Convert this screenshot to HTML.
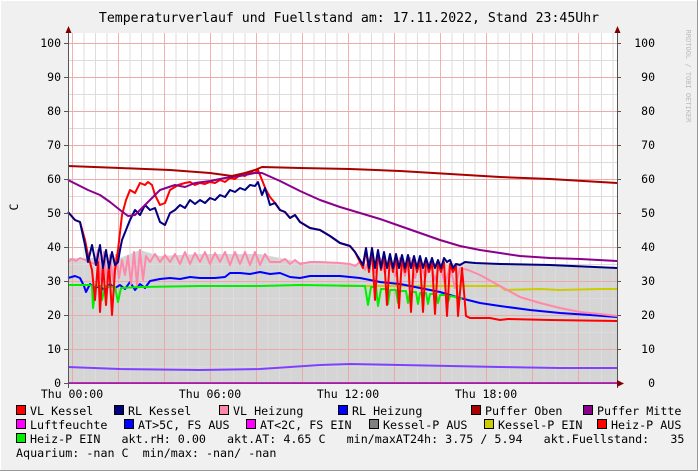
<!DOCTYPE html>
<html><head><meta charset="utf-8"><style>
html,body{margin:0;padding:0;background:#f0f0f0}
svg{display:block}
text{font-family:"DejaVu Sans Mono","Liberation Mono",monospace;fill:#000}
</style></head><body>
<svg width="698" height="471" viewBox="0 0 698 471" xmlns="http://www.w3.org/2000/svg">
<rect x="0" y="0" width="698" height="471" fill="#f0f0f0"/>
<line x1="0.5" y1="0" x2="0.5" y2="471" stroke="#fff"/>
<line x1="0" y1="0.5" x2="698" y2="0.5" stroke="#fff"/>
<line x1="697.5" y1="0" x2="697.5" y2="471" stroke="#999"/>
<line x1="0" y1="470.5" x2="698" y2="470.5" stroke="#999"/>
<rect x="68" y="33" width="549" height="350" fill="#fff"/>
<polygon fill="#d5d5d5" points="68,258 120,258 140,250 160,256 200,254 260,254 300,262 360,264 470,263 475,263 500,264 550,265 617,268 617,383 68,383"/>
<g stroke="#dcdcdc" stroke-width="1">
<path d="M68,366.5H617M68,349.5H617M68,332.5H617M68,315.5H617M68,298.5H617M68,281.5H617M68,264.5H617M68,247.5H617M68,230.5H617M68,213.5H617M68,196.5H617M68,179.5H617M68,162.5H617M68,145.5H617M68,128.5H617M68,111.5H617M68,94.5H617M68,77.5H617M68,60.5H617M68,43.5H617"/>
<path d="M84,33V383M95.5,33V383M107,33V383M130,33V383M141.5,33V383M153,33V383M176,33V383M187.5,33V383M199,33V383M222,33V383M233.5,33V383M245,33V383M268,33V383M279.5,33V383M291,33V383M314,33V383M325.5,33V383M337,33V383M360,33V383M371.5,33V383M383,33V383M406,33V383M417.5,33V383M429,33V383M452,33V383M463.5,33V383M475,33V383M498,33V383M509.5,33V383M521,33V383M544,33V383M555.5,33V383M567,33V383M590,33V383M601.5,33V383M613,33V383"/>
</g>
<g stroke="#f0a0a0" stroke-width="1" opacity="0.8">
<path d="M68,349.5H617M68,315.5H617M68,281.5H617M68,247.5H617M68,213.5H617M68,179.5H617M68,145.5H617M68,111.5H617M68,77.5H617M68,43.5H617"/>
<path d="M72.5,33V383M118.5,33V383M164.5,33V383M210.5,33V383M256.5,33V383M302.5,33V383M348.5,33V383M394.5,33V383M440.5,33V383M486.5,33V383M532.5,33V383M578.5,33V383"/>
</g>
<g fill="none" stroke-width="2" stroke-linejoin="round">
<polyline stroke="#8040ff" points="68,367 120,369 200,370 260,369 290,367 320,365 350,364 400,365 450,366 500,367 560,368 617,368"/>
<polyline stroke="#ff00ff" points="68,383 617,383"/>
<polyline stroke="#cccc00" points="340,286 465,286 500,286 505,290 540,289 560,290 600,289 617,289"/>
<polyline stroke="#0000ff" points="68,278 75,276 80,278 84,286 86,292 90,284 95,288 100,286 105,291 110,284 115,288 120,285 125,289 130,282 135,290 140,284 145,288 150,281 160,279 170,278 180,279 190,277 200,278 215,278 225,277 230,273 240,273 250,274 260,272 270,274 280,273 290,277 300,278 310,276 320,276 340,276 360,278 380,282 400,284 420,288 440,292 460,298 480,303 500,306 530,310 560,313 590,315 617,317"/>
<polyline stroke="#ff88aa" points="68,262 72,259 76,261 80,258 85,260 90,262 95,264 98,250 101,280 104,252 107,282 110,255 113,280 116,255 119,278 122,260 125,275 128,256 131,284 134,252 137,285 140,250 143,280 146,256 150,262 155,254 160,262 165,255 170,262 175,254 180,264 185,252 190,264 195,253 200,262 205,252 210,264 215,253 220,262 225,252 230,265 235,252 240,264 245,252 250,265 255,252 260,265 265,254 270,262 280,262 285,259 290,264 295,260 300,264 310,262 320,262 340,263 350,264 355,266 360,262 365,270 370,258 375,272 380,258 385,274 390,258 395,276 400,258 405,276 410,258 415,278 420,260 425,278 430,262 435,280 440,264 445,285 450,266 455,288 460,268 468,270 480,275 500,286 520,297 540,303 560,308 580,312 600,314 617,316"/>
<polyline stroke="#00ee00" points="68,285 90,285 92,286 93,308 96,286 100,286 102,300 105,286 115,287 118,302 121,288 140,287 200,286 260,286 300,285 365,286 368,305 371,287 376,287 378,306 381,289 386,289 388,304 390,290 396,290 398,303 400,291 406,291 408,303 410,292 416,292 418,304 420,293 426,293 428,304 430,294 436,294 438,303 440,295 446,295 448,302 450,296 456,297 458,300 462,298"/>
<polyline stroke="#ff0000" points="68,212 75,220 80,222 85,240 88,255 92,270 95,300 98,262 100,312 103,265 106,305 109,262 112,315 115,270 118,250 122,215 126,200 130,190 135,193 140,183 145,185 148,182 152,185 155,195 160,205 165,203 170,190 175,187 178,185 185,183 190,182 195,185 200,183 205,184 210,182 215,183 220,180 225,182 230,178 235,179 240,175 245,176 250,172 255,173 258,170 262,180 266,190 270,197 275,203 280,210 285,212 290,218 295,215 300,222 305,225 310,228 320,230 330,236 340,243 350,246 355,252 360,262 363,268 366,250 369,272 372,250 375,300 378,252 381,270 384,256 387,305 390,256 393,272 396,256 399,308 402,258 405,272 408,258 411,312 414,258 417,272 420,260 423,312 426,260 429,272 432,262 435,314 438,262 441,272 444,262 447,316 450,264 453,272 456,266 458,316 462,268 466,316 470,318 490,318 500,320 508,319 550,320 617,321"/>
<polyline stroke="#000080" points="68,212 75,220 80,222 85,245 88,262 92,245 96,265 100,245 103,268 106,250 109,268 112,252 115,265 118,262 120,250 122,240 126,230 130,220 135,210 140,215 145,205 150,210 155,208 160,222 165,225 170,213 175,210 180,205 185,208 190,200 195,204 200,200 205,203 210,198 215,200 220,195 225,197 230,190 235,192 240,188 245,190 250,185 255,186 258,182 262,195 265,188 270,205 275,203 280,210 285,212 290,218 295,215 300,222 305,225 310,228 320,230 330,236 340,243 350,246 355,252 360,260 363,265 366,248 369,268 372,248 375,268 378,250 381,268 384,252 387,268 390,254 393,268 396,254 399,268 402,255 405,268 408,255 411,268 414,256 417,268 420,256 423,268 426,258 429,268 432,258 435,268 438,260 441,268 444,258 447,262 450,260 453,268 456,264 460,265 465,262 475,263 500,264 550,265 617,268"/>
<polyline stroke="#8b008b" points="68,180 80,186 88,190 100,195 110,202 120,210 128,216 135,215 145,205 160,190 175,185 185,187 195,183 210,181 225,178 240,176 255,173 262,173 280,181 300,191 320,200 340,207 360,213 380,219 400,226 420,233 440,240 460,246 480,250 500,253 520,256 550,258 580,259 617,261"/>
<polyline stroke="#aa0000" points="68,166 120,168 170,170 210,173 232,176 245,173 255,170 262,167 300,168 350,169 400,171 450,174 500,177 550,179 617,183"/>
</g>
<line x1="68.5" y1="28" x2="68.5" y2="388" stroke="#555"/>
<line x1="617.5" y1="28" x2="617.5" y2="388" stroke="#555"/>
<line x1="64" y1="383.5" x2="622" y2="383.5" stroke="#555"/>
<polygon points="65.5,33 71.5,33 68.5,26" fill="#800000"/>
<polygon points="614.5,33 620.5,33 617.5,26" fill="#800000"/>
<polygon points="617,380 617,387 624,383.5" fill="#800000"/>
<g stroke="#555"><path d="M64,43.5H68M64,77.5H68M64,111.5H68M64,145.5H68M64,179.5H68M64,213.5H68M64,247.5H68M64,281.5H68M64,315.5H68M64,349.5H68M617,43.5H621M617,77.5H621M617,111.5H621M617,145.5H621M617,179.5H621M617,213.5H621M617,247.5H621M617,281.5H621M617,315.5H621M617,349.5H621"/></g>
<g font-size="11.5" text-anchor="end">
<text x="61" y="47">100</text><text x="61" y="81">90</text><text x="61" y="115">80</text><text x="61" y="149">70</text><text x="61" y="183">60</text><text x="61" y="217">50</text><text x="61" y="251">40</text><text x="61" y="285">30</text><text x="61" y="319">20</text><text x="61" y="353">10</text><text x="61" y="387">0</text>
</g>
<g font-size="11.5" text-anchor="end">
<text x="655" y="47">100</text><text x="655" y="81">90</text><text x="655" y="115">80</text><text x="655" y="149">70</text><text x="655" y="183">60</text><text x="655" y="217">50</text><text x="655" y="251">40</text><text x="655" y="285">30</text><text x="655" y="319">20</text><text x="655" y="353">10</text><text x="655" y="387">0</text>
</g>
<g font-size="11.5" text-anchor="middle">
<text x="72" y="398">Thu 00:00</text><text x="210" y="398">Thu 06:00</text><text x="348" y="398">Thu 12:00</text><text x="486" y="398">Thu 18:00</text>
</g>
<text x="349" y="22" font-size="13.2" text-anchor="middle">Temperaturverlauf und Fuellstand am: 17.11.2022, Stand 23:45Uhr</text>
<text x="18" y="207" font-size="11.5" text-anchor="middle" transform="rotate(-90 18 207)">C</text>
<text x="686" y="76" font-size="7" style="fill:#bbb" text-anchor="middle" transform="rotate(90 686 76)">RRDTOOL / TOBI OETIKER</text>
<g stroke="#000" stroke-width="1">
<rect x="16.5" y="405.5" width="9" height="9" fill="#ff0000"/>
<rect x="114.5" y="405.5" width="9" height="9" fill="#000080"/>
<rect x="219.5" y="405.5" width="9" height="9" fill="#ff88aa"/>
<rect x="338.5" y="405.5" width="9" height="9" fill="#0000ff"/>
<rect x="471.5" y="405.5" width="9" height="9" fill="#aa0000"/>
<rect x="583.5" y="405.5" width="9" height="9" fill="#8b008b"/>
<rect x="16.5" y="419.5" width="9" height="9" fill="#ff00ff"/>
<rect x="124.5" y="419.5" width="9" height="9" fill="#0000ff"/>
<rect x="246.5" y="419.5" width="9" height="9" fill="#ff00ff"/>
<rect x="369.5" y="419.5" width="9" height="9" fill="#808080"/>
<rect x="484.5" y="419.5" width="9" height="9" fill="#cccc00"/>
<rect x="597.5" y="419.5" width="9" height="9" fill="#ff0000"/>
<rect x="16.5" y="433.5" width="9" height="9" fill="#00ee00"/>
</g>
<g font-size="11.7" style="white-space:pre">
<text x="30" y="415">VL Kessel</text>
<text x="128" y="415">RL Kessel</text>
<text x="233" y="415">VL Heizung</text>
<text x="352" y="415">RL Heizung</text>
<text x="485" y="415">Puffer Oben</text>
<text x="597" y="415">Puffer Mitte</text>
<text x="30" y="429">Luftfeuchte</text>
<text x="138" y="429">AT&gt;5C, FS AUS</text>
<text x="260" y="429">AT&lt;2C, FS EIN</text>
<text x="383" y="429">Kessel-P AUS</text>
<text x="498" y="429">Kessel-P EIN</text>
<text x="611" y="429">Heiz-P AUS</text>
<text x="30" y="443" xml:space="preserve">Heiz-P EIN   akt.rH: 0.00   akt.AT: 4.65 C   min/maxAT24h: 3.75 / 5.94   akt.Fuellstand:   35</text>
<text x="16" y="457" xml:space="preserve">Aquarium: -nan C  min/max: -nan/ -nan</text>
</g>
</svg>
</body></html>
